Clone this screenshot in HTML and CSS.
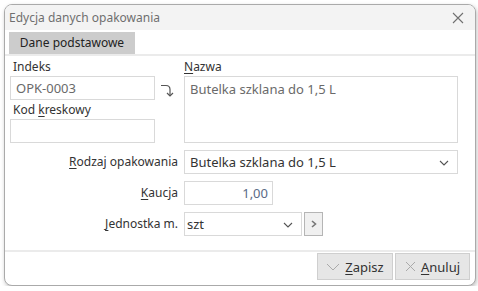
FILE: index.html
```html
<!DOCTYPE html>
<html lang="pl">
<head>
  <meta charset="UTF-8">
  <title>Edycja danych opakowania</title>
  <link rel="stylesheet" href="styles.css">
</head>
<body>
  <div class="window">
    <div class="titlebar">
      <span>Edycja danych opakowania</span>
      <svg class="close" width="12" height="12" viewBox="0 0 12 12"><path d="M1 1 L11 11 M11 1 L1 11" stroke="#707070" stroke-width="1.1" fill="none"/></svg>
    </div>
    <div class="tabs">
      <div class="tab">Dane podstawowe</div>
    </div>
    <main class="content">
      <div class="top">
        <div class="col-left">
          <label>Indeks</label>
          <div class="field">OPK-0003</div>
          <label>Kod <u>k</u>reskowy</label>
          <div class="field"></div>
        </div>
        <div class="col-arrow">
          <svg width="15" height="15" viewBox="0 0 15 15"><path d="M1 2.5 H6 Q10 2.5 10 6.5 V13" stroke="#555" stroke-width="1.2" fill="none"/><path d="M7 10 L10 13 L13 10" stroke="#555" stroke-width="1.2" fill="none"/></svg>
        </div>
        <div class="col-right">
          <label><u>N</u>azwa</label>
          <div class="field area">Butelka szklana do 1,5 L</div>
        </div>
      </div>
      <div class="rows">
        <label class="row-label"><u>R</u>odzaj opakowania</label>
        <div class="field select dark">Butelka szklana do 1,5 L
          <svg class="chev" width="10" height="6" viewBox="0 0 10 6"><path d="M1 1 L5 5 L9 1" stroke="#555" stroke-width="1.1" fill="none"/></svg>
        </div>
        <label class="row-label"><u>K</u>aucja</label>
        <div class="field money">1,00</div>
        <label class="row-label"><u>J</u>ednostka m.</label>
        <div class="unit">
          <div class="field select unit-select dark">szt
            <svg class="chev" width="10" height="6" viewBox="0 0 10 6"><path d="M1 1 L5 5 L9 1" stroke="#555" stroke-width="1.1" fill="none"/></svg>
          </div>
          <div class="more">
            <svg width="6" height="8" viewBox="0 0 6 8"><path d="M1 1 L4.5 4 L1 7" stroke="#777" stroke-width="1.6" fill="none"/></svg>
          </div>
        </div>
      </div>
    </main>
    <footer class="buttons">
      <button class="btn">
        <svg width="14" height="8" viewBox="0 0 14 8"><path d="M1 1 L7 7 L13 1" stroke="#aaa" stroke-width="1" fill="none"/></svg>
        <span><u>Z</u>apisz</span>
      </button>
      <button class="btn">
        <svg width="11" height="11" viewBox="0 0 11 11"><path d="M1 1 L10 10 M10 1 L1 10" stroke="#aaa" stroke-width="1" fill="none"/></svg>
        <span><u>A</u>nuluj</span>
      </button>
    </footer>
  </div>
</body>
</html>
```

FILE: styles.css
```css
* {
  margin: 0;
  padding: 0;
  box-sizing: border-box;
}

body {
  font-family: 'Noto Sans', 'Open Sans', sans-serif;
  font-size: 12px;
  color: #222;
  background: #fff;
}

.window {
  margin: 4px 0 0 4px;
  width: 472px;
  height: 282px;
  border: 1px solid #aaa;
  border-radius: 8px;
  overflow: hidden;
  background: #fff;
  display: flex;
  flex-direction: column;
  box-shadow: 1px 2px 4px rgba(0, 0, 0, 0.25);
}

.titlebar {
  height: 25px;
  background: #f3f3f3;
  display: flex;
  justify-content: space-between;
  align-items: center;
  padding: 0 11px 0 4px;
  color: #6f6f6f;
  font-size: 12px;
}

.tabs {
  height: 26px;
  padding: 2px 0 0 4px;
  border-bottom: 2px solid #ebebeb;
}

.tab {
  width: 126px;
  height: 22px;
  background: #cccccc;
  text-align: center;
  line-height: 22px;
  color: #222;
}

.content {
  flex-grow: 1;
  padding: 0 0 0 5px;
}

label {
  display: block;
  color: #333;
}

u {
  text-underline-offset: 2px;
}

.top {
  display: flex;
}

.col-left {
  width: 145px;
}

.col-left label {
  height: 20px;
  padding: 3px 0 0 3px;
  line-height: 16px;
}

.col-left label + .field + label {
  height: 19px;
  padding-top: 2px;
}

.col-arrow {
  width: 29px;
  padding: 27px 0 0 5px;
}

.col-arrow svg {
  display: block;
}

.col-right {
  width: 274px;
}

.col-right label {
  height: 20px;
  padding-top: 3px;
  line-height: 16px;
}

.field {
  height: 24px;
  border: 1px solid #d9d9d9;
  background: #fff;
  padding: 0 5px;
  line-height: 22px;
  font-size: 13px;
  color: #6a6a6a;
  position: relative;
}

.field.area {
  height: 67px;
  line-height: 24px;
}

.field.dark {
  color: #333;
}

.rows {
  display: grid;
  grid-template-columns: 168px 274px;
  column-gap: 6px;
  row-gap: 7px;
  margin-top: 7px;
}

.row-label {
  text-align: right;
  line-height: 24px;
}

.chev {
  position: absolute;
  right: 8px;
  top: 9px;
}

.money {
  width: 89px;
  text-align: right;
  padding-right: 4px;
  color: #5b6a86;
}

.unit {
  display: flex;
  gap: 2px;
}

.unit-select {
  width: 118px;
  padding-left: 2px;
}

.more {
  width: 19px;
  height: 24px;
  border: 1px solid #b5b5b5;
  background: #f0f0f0;
  display: flex;
  align-items: center;
  justify-content: center;
}

.buttons {
  height: 35px;
  border-top: 2px solid #ebebeb;
  display: flex;
  justify-content: flex-end;
  gap: 2px;
  padding: 1px 5px 0 0;
}

.btn {
  height: 27px;
  width: 76px;
  border: 1px solid #cfcfcf;
  background: #e6e6e6;
  font-family: inherit;
  font-size: 13px;
  color: #333;
  display: flex;
  align-items: center;
  justify-content: center;
  gap: 5px;
}

.btn + .btn {
  width: 75px;
}
```
